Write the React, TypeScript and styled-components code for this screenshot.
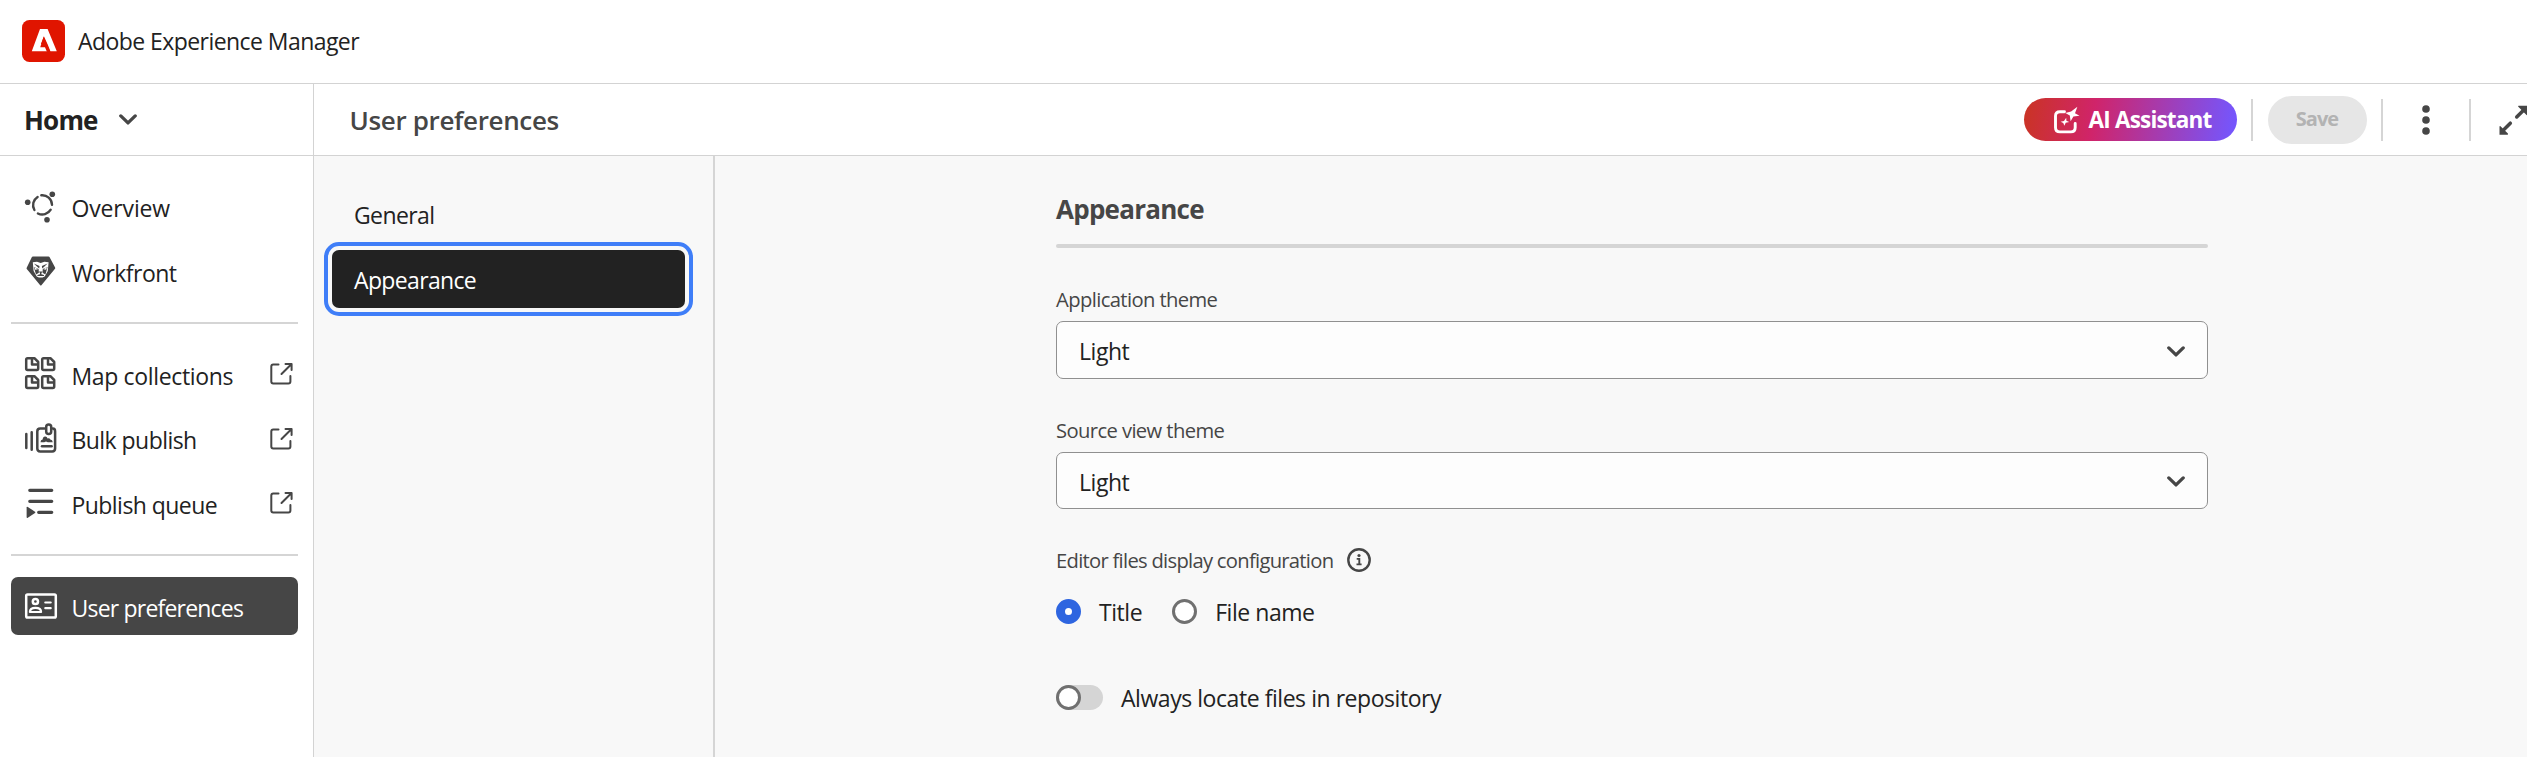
import React from "react";
import styled, { createGlobalStyle } from "styled-components";

const GlobalStyle = createGlobalStyle`
  * { box-sizing: border-box; }
  body { margin: 0; overflow: hidden; background: #fff; font-family: "Open Sans", "Noto Sans", sans-serif; color: #222; }
  button { font-family: inherit; }
  svg { display: block; flex: none; }
`;

const Page = styled.div`
  display: flex;
  flex-direction: column;
  width: 100%;
  height: 757px;
  overflow: hidden;
`;

const Text = styled.span<{ $size?: number; $weight?: number; $track?: number; $color?: string }>`
  font-size: ${(p) => p.$size ?? 23}px;
  font-weight: ${(p) => p.$weight ?? 400};
  letter-spacing: ${(p) => p.$track ?? -0.45}px;
  color: ${(p) => p.$color ?? "#222"};
  white-space: nowrap;
  line-height: 30px;
`;

const TopBar = styled.header`
  display: flex;
  align-items: center;
  gap: 13px;
  height: 84px;
  padding: 0 0 2px 22px;
  border-bottom: 1px solid #d3d3d3;
`;

const Body = styled.div`
  display: flex;
  flex: 1;
  min-height: 0;
`;

const Sidebar = styled.nav`
  display: flex;
  flex-direction: column;
  width: 314px;
  flex: none;
  border-right: 1px solid #d3d3d3;
`;

const HomeSwitch = styled.div`
  display: flex;
  align-items: center;
  gap: 21px;
  height: 72px;
  padding-left: 24px;
  border-bottom: 1px solid #d3d3d3;
`;

const NavList = styled.div`
  display: flex;
  flex-direction: column;
  gap: 6.5px;
  padding: 21.5px 15px 0 11px;
`;

const NavItem = styled.div<{ $active?: boolean }>`
  display: flex;
  align-items: center;
  height: 58px;
  padding: 0 5px 0 13px;
  border-radius: 7px;
  background: ${(p) => (p.$active ? "#464646" : "transparent")};
`;

const NavLabel = styled(Text)`
  flex: 1;
  padding: 3px 0 0 13.5px;
`;

const Divider = styled.div`
  height: 2px;
  margin: 15.5px 0 14.5px;
  background: #d5d5d5;
`;

const Workspace = styled.div`
  display: flex;
  flex-direction: column;
  flex: 1;
  min-width: 0;
`;

const Toolbar = styled.div`
  display: flex;
  align-items: center;
  height: 72px;
  padding-left: 35.5px;
  border-bottom: 1px solid #d3d3d3;
  overflow: hidden;
`;

const ToolbarEnd = styled.div`
  display: flex;
  align-items: center;
  margin: 0 -1px 0 auto;
`;

const AssistantButton = styled.button`
  display: flex;
  align-items: center;
  gap: 8.5px;
  width: 213px;
  height: 43px;
  padding: 0 0 0 29px;
  border: 0;
  border-radius: 22px;
  background: linear-gradient(98deg, #ca3423 0%, #d0246a 33%, #7655fb 97%);
`;

const SaveButton = styled.button`
  width: 99px;
  height: 48px;
  padding: 0 1px 2px 0;
  border: 0;
  border-radius: 24px;
  background: #e6e6e6;
`;

const Rule = styled.i<{ $before: number; $after: number }>`
  width: 2px;
  height: 42px;
  margin: 0 ${(p) => p.$after}px 0 ${(p) => p.$before}px;
  background: #d5d5d5;
`;

const Panels = styled.div`
  display: flex;
  flex: 1;
  background: #f8f8f8;
`;

const Tabs = styled.div`
  display: flex;
  flex-direction: column;
  gap: 7px;
  width: 401px;
  flex: none;
  padding: 29px 28px 0 18px;
  border-right: 2px solid #d5d5d5;
`;

const Tab = styled.div<{ $active?: boolean }>`
  display: flex;
  align-items: center;
  height: 58px;
  padding: 1px 0 0 22px;
  border-radius: 7px;
  background: ${(p) => (p.$active ? "#222" : "transparent")};
  outline: ${(p) => (p.$active ? "4px solid #3f7ef8" : "none")};
  outline-offset: 4px;
`;

const Content = styled.main`
  display: flex;
  flex-direction: column;
  width: 1152px;
  margin: 36px auto 0 341px;
`;

const Heading = styled.div`
  display: flex;
  align-items: center;
  height: 52px;
  padding-bottom: 18px;
`;

const Bar = styled.div`
  height: 4px;
  border-radius: 2px;
  background: #d5d5d5;
`;

const Label = styled.div`
  display: flex;
  align-items: center;
  gap: 14px;
  height: 30px;
  margin-top: 36px;
`;

const Select = styled.div<{ $height: number }>`
  display: flex;
  align-items: center;
  justify-content: space-between;
  height: ${(p) => p.$height}px;
  margin-top: 7px;
  padding: 2px 22px 0 22px;
  border: 1px solid #909090;
  border-radius: 7px;
  background: #fdfdfd;
`;

const Options = styled.div`
  display: flex;
  align-items: center;
  margin-top: 21px;
  height: 31px;
`;

const Radio = styled.i<{ $on?: boolean }>`
  display: block;
  width: 25px;
  height: 25px;
  flex: none;
  border-radius: 50%;
  border: ${(p) => (p.$on ? "9px solid #2e65e0" : "3px solid #707070")};
  background: #fff;
`;

const OptionText = styled(Text)`
  margin: 0 30px 0 18px;
`;

const Toggle = styled.div`
  display: flex;
  align-items: center;
  height: 31px;
  margin-top: 55px;
  gap: 18px;
`;

const Track = styled.div`
  width: 47px;
  height: 25px;
  border-radius: 13px;
  background: #d5d5d5;
`;

const Chevron = () => (
  <svg width="18" height="11" viewBox="0 0 18 11" fill="none" stroke="#464646" strokeWidth="3.3" strokeLinecap="round" strokeLinejoin="round">
    <path d="M1.8 1.9 9 8.9l7.2-7" />
  </svg>
);

const Logo = () => (
  <svg width="43" height="42" viewBox="0 0 43 42">
    <rect width="43" height="42" rx="7.5" fill="#e01500" />
    <path fill="#fff" d="M18 9h7.6L34.8 31.2H28.4L25.8 24.8 21.9 16.3 18.9 24H23.4L25.4 31.2H9.8z" />
    <path fill="#e01500" d="M21.7 16.8 28.2 31.7H24.9L23 27.2H18.2z" />
  </svg>
);

const OverviewIcon = () => (
  <svg width="34" height="34" viewBox="0 0 34 34" fill="none" stroke="#464646" strokeWidth="2.4">
    <g strokeLinecap="round">
      <path d="M17.3 5.3A9.7 9.7 0 0 1 28 14.7" />
      <path d="M13.6 6.9A9.7 9.7 0 0 0 10.4 20" />
      <path d="M13.9 23.5A9.7 9.7 0 0 0 26.7 19.7" />
    </g>
    <g fill="#464646" stroke="none">
      <circle cx="3.7" cy="12.2" r="2.8" />
      <circle cx="28.3" cy="4.3" r="2.8" />
      <circle cx="23" cy="29.8" r="2.8" />
    </g>
  </svg>
);

const WorkfrontIcon = () => (
  <svg width="34" height="34" viewBox="0 0 34 34">
    <path fill="#464646" d="M8.9 2.4h15.6q.7 0 1 .6l5.6 10.4q.4.7-.1 1.3L17.4 31.2q-.6.7-1.2 0L2.8 14.9q-.5-.6-.1-1.2L7.9 3q.3-.6 1-.6z" />
    <path fill="#fff" d="M8.8 8.2 13 7.8 16.7 9 20.4 7.8 24.6 8.2 23.8 17 20.7 22.6 18.5 23.6H14.9L12.7 22.6 9.6 17z" />
    <path fill="#464646" d="M9.8 9.6 15.5 12 15.2 14.4 13.2 12.8zM23.6 9.6 17.9 12 18.2 14.4 20.2 12.8zM9.8 13 14.6 15 14.9 18.7 12 20.5zM23.6 13 18.8 15 18.5 18.7 21.4 20.5zM15 17.4h3.4l-1 1.8v1l2.6.8v.9h-6.6v-.9l2.6-.8v-1z" />
    <path fill="#fff" d="M10.4 13.3 14 15.3 11.2 15.8zM23 13.3 19.4 15.3 22.2 15.8z" />
  </svg>
);

const docAt: [number, number][] = [[2.2, 2.2], [18.2, 2.2], [2.2, 20.2], [18.2, 20.2]];
const CollectionsIcon = () => (
  <svg width="34" height="36" viewBox="0 0 34 36" fill="none" stroke="#464646" strokeWidth="2.5" strokeLinejoin="round">
    {docAt.map(([x, y]) => (
      <path key={`${x}-${y}`} transform={`translate(${x} ${y})`} d="M1.4 0H8.2L12 3.8V10.4Q12 11.8 10.6 11.8H1.4Q0 11.8 0 10.4V1.4Q0 0 1.4 0zM5.8 0.5V6.2H11.5" />
    ))}
  </svg>
);

const BulkIcon = () => (
  <svg width="34" height="34" viewBox="0 0 34 34" fill="none" stroke="#464646" strokeWidth="2.5" strokeLinecap="round">
    <path d="M2.3 12V26M7.7 10.2V27.7" />
    <path d="M20.5 6.6H16.2Q13.3 6.6 13.3 9.5V26.5Q13.3 29.4 16.2 29.4H28.2Q31.1 29.4 31.1 26.5V9.5Q31.1 6.6 28.8 6.6" />
    <rect x="22.2" y="2.6" width="5" height="9.4" rx="2.5" />
    <path d="M18 24.2H27.6" />
    <path fill="#464646" stroke="none" d="M16.5 20.3Q16.5 17.6 18.6 17.5 19 14.4 21.3 14.6 23 14.8 23.6 16.5 25.5 15.8 26.3 17.5 28.5 17.7 28.8 20.3H23.8L22 19.6 20.2 20.3z" />
  </svg>
);

const QueueIcon = () => (
  <svg width="34" height="34" viewBox="0 0 34 34" fill="none" stroke="#464646" strokeWidth="3.3" strokeLinecap="round">
    <path d="M5.8 4.3H27.7M5.8 15.3H27.7M14.7 26.3H27.7" />
    <path fill="#464646" stroke="none" d="M2.6 21.5Q2.6 20.2 3.8 20.9L11 25.7Q11.8 26.3 11 26.9L3.8 31.7Q2.6 32.4 2.6 31.1z" />
  </svg>
);

const PreferencesIcon = () => (
  <svg width="34" height="34" viewBox="0 0 34 34" fill="none" stroke="#fff" strokeWidth="2.5">
    <rect x="2.2" y="5.5" width="29.6" height="23" rx="1.3" />
    <circle cx="11.4" cy="12.5" r="2.6" />
    <path strokeLinejoin="round" d="M5.9 23Q5.9 18.8 11.5 18.8T17.1 23z" strokeWidth="2.2" />
    <path strokeLinecap="round" d="M21.3 13.5H26.7M21.3 19.2H26.7" strokeWidth="2.2" />
  </svg>
);

const ExternalIcon = () => (
  <svg width="24" height="24" viewBox="0 0 24 24" fill="none" stroke="#464646" strokeWidth="2" strokeLinecap="round" strokeLinejoin="round">
    <path d="M9.5 2.6H4.3Q2.3 2.6 2.3 4.6V19.6Q2.3 21.6 4.3 21.6H19.4Q21.4 21.6 21.4 19.6V14" />
    <path d="M12.5 12 22.3 2.2M16.5 1.9H22.6V8" />
  </svg>
);

const AssistantIcon = () => (
  <svg width="27" height="28" viewBox="0 0 27 28">
    <path fill="none" stroke="#fff" strokeWidth="2.9" strokeLinecap="round" d="M11.5 5.7H7Q2.5 5.7 2.5 10V21.5Q2.5 25.9 7 25.9H17.8Q22.2 25.9 22.2 21.5V17.5" />
    <path fill="#fff" d="M24.4.7 22 7.3 26.5 9.8 20.4 10.4 17.6 15.2 16.8 9.5 12.3 7 18.1 5.4z" />
    <path fill="#fff" d="M13.2 11.8 13.4 14.8 16.2 16 12.7 16.7 11.3 19.8 10.3 17 7.6 15.8 11 14.9z" />
  </svg>
);

const MoreIcon = () => (
  <svg width="8" height="30" viewBox="0 0 8 30" fill="#464646">
    <circle cx="4" cy="4" r="3.8" />
    <circle cx="4" cy="15" r="3.8" />
    <circle cx="4" cy="26" r="3.8" />
  </svg>
);

const ExpandIcon = () => (
  <svg width="30" height="30" viewBox="0 0 30 30" fill="#464646" stroke="#464646">
    <path stroke="none" d="M20.5.8H29.5V9.8Q29.3 10.4 28.5 10L20.3 1.7Q19.9 1 20.5.8zM9.5 29.8H1.5V21.5Q1.7 20.7 2.5 21.2L9.9 28.6Q10.3 29.4 9.5 29.8z" />
    <path strokeWidth="3.5" strokeLinecap="round" d="M25 5.7 18.7 12M6 24.5 12.3 18.2" />
  </svg>
);

const InfoIcon = () => (
  <svg width="24" height="24" viewBox="0 0 24 24">
    <circle cx="12" cy="12" r="10.7" fill="none" stroke="#464646" strokeWidth="2.4" />
    <circle cx="12" cy="7.5" r="1.6" fill="#464646" />
    <path fill="none" stroke="#464646" strokeWidth="1.9" d="M9.7 10.9H12.3V16.4M9.5 16.4H14.6" />
  </svg>
);

const links = [
  { name: "Map collections", icon: <CollectionsIcon />, track: -0.35 },
  { name: "Bulk publish", icon: <BulkIcon />, track: -0.55 },
  { name: "Publish queue", icon: <QueueIcon />, track: -0.55 },
];

export default function App() {
  return (
    <Page>
      <GlobalStyle />
      <TopBar>
        <Logo />
        <Text $track={-0.56}>Adobe Experience Manager</Text>
      </TopBar>
      <Body>
        <Sidebar>
          <HomeSwitch>
            <Text $size={26} $weight={700} $track={-0.8}>Home</Text>
            <Chevron />
          </HomeSwitch>
          <NavList>
            <NavItem><OverviewIcon /><NavLabel $track={-0.15}>Overview</NavLabel></NavItem>
            <NavItem><WorkfrontIcon /><NavLabel $track={-0.55}>Workfront</NavLabel></NavItem>
            <Divider />
            {links.map((l) => (
              <NavItem key={l.name}>{l.icon}<NavLabel $track={l.track}>{l.name}</NavLabel><ExternalIcon /></NavItem>
            ))}
            <Divider />
            <NavItem $active><PreferencesIcon /><NavLabel $color="#fff" $weight={500} $track={-0.8}>User preferences</NavLabel></NavItem>
          </NavList>
        </Sidebar>
        <Workspace>
          <Toolbar>
            <Text $size={26} $weight={600} $track={-0.35} $color="#464646">User preferences</Text>
            <ToolbarEnd>
              <AssistantButton>
                <AssistantIcon />
                <Text $size={22.5} $weight={700} $track={-0.8} $color="#fff">AI Assistant</Text>
              </AssistantButton>
              <Rule $before={14} $after={15} />
              <SaveButton><Text $size={20} $weight={700} $track={-1} $color="#b3b3b3">Save</Text></SaveButton>
              <Rule $before={14} $after={39} />
              <MoreIcon />
              <Rule $before={39} $after={27} />
              <ExpandIcon />
            </ToolbarEnd>
          </Toolbar>
          <Panels>
            <Tabs>
              <Tab><Text $track={-0.6}>General</Text></Tab>
              <Tab $active><Text $weight={500} $track={-0.65} $color="#fff">Appearance</Text></Tab>
            </Tabs>
            <Content>
              <Heading><Text $size={26} $weight={700} $track={-0.75} $color="#464646">Appearance</Text></Heading>
              <Bar />
              <Label><Text $size={20.2} $track={-0.6} $color="#464646">Application theme</Text></Label>
              <Select $height={58}><Text>Light</Text><Chevron /></Select>
              <Label><Text $size={20.2} $track={-0.6} $color="#464646">Source view theme</Text></Label>
              <Select $height={57}><Text>Light</Text><Chevron /></Select>
              <Label><Text $size={20.2} $track={-0.71} $color="#464646">Editor files display configuration</Text><InfoIcon /></Label>
              <Options>
                <Radio $on /><OptionText>Title</OptionText>
                <Radio /><OptionText>File name</OptionText>
              </Options>
              <Toggle><Track><Radio /></Track><Text>Always locate files in repository</Text></Toggle>
            </Content>
          </Panels>
        </Workspace>
      </Body>
    </Page>
  );
}
